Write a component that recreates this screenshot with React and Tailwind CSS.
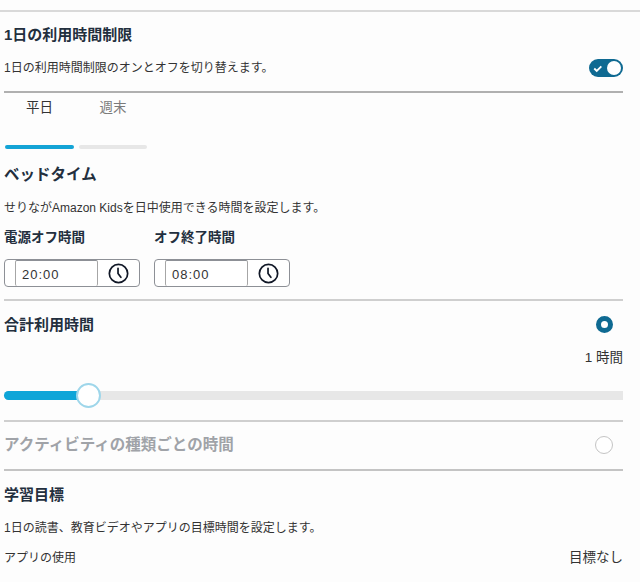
const font = { fontFamily: '"Liberation Sans", "Noto Sans CJK JP", sans-serif' };

function Clock() {
  return (
    <svg width="21" height="21" viewBox="0 0 22 22" fill="none" stroke="#111827" strokeWidth="1.8" strokeLinecap="round">
      <circle cx="11" cy="11" r="9.6" />
      <path d="M10.5 5.5 V11 L13.5 15" />
    </svg>
  );
}

function TimeField({ label, value }) {
  return (
    <div className="w-[136px]">
      <div className="h-[20px] text-[13.5px] leading-[20px] font-bold text-[#232f3e]">{label}</div>
      <div className="mt-[11px] h-[28px] flex items-stretch rounded-[4px] border border-[#8d9096] bg-white">
        <div className="ml-[10px] w-[83px] border-x border-[#a6a6a6] border-t border-t-[#8d9096] rounded-[2px] pl-[6px] text-[13px] leading-[27px] tracking-[1px] text-[#333]">{value}</div>
        <div className="flex-1 flex items-center justify-center"><Clock /></div>
      </div>
    </div>
  );
}

export default function App() {
  return (
    <div style={font} className="w-[640px] h-[582px] overflow-hidden bg-[#fdfdfd] pt-[10px] pl-[4px] pr-[17px]">
      <div className="h-[2px] bg-[#d9d9d9] -ml-[4px] -mr-[17px]" />
      <div className="h-[68px] border-b-2 border-[#b0b0b0] mt-[13px]">
        <div className="h-[20px] text-[15px] leading-[20px] font-bold text-[#232f3e]">1日の利用時間制限</div>
        <div className="mt-[13px] h-[20px] flex items-center justify-between">
          <span className="text-[12px] text-[#333]">1日の利用時間制限のオンとオフを切り替えます。</span>
          <span className="w-[34px] h-[18px] rounded-full bg-[#0f6a92] flex items-center justify-between pl-[4px] pr-[2px]">
            <svg width="10" height="9" viewBox="0 0 12 10" fill="none" stroke="#fff" strokeWidth="2.2"><path d="M1.5 5 L4.5 8 L10 2.5" /></svg>
            <span className="w-[14px] h-[14px] rounded-full bg-white" />
          </span>
        </div>
      </div>
      <div className="flex gap-[5px] pl-[1px]">
        <div className="w-[69px] text-center">
          <div className="h-[52px] pt-[5px] text-[13.5px] leading-[20px] text-[#333]">平日</div>
          <div className="h-[4px] rounded-full bg-[#14a4d6]" />
        </div>
        <div className="w-[68px] text-center">
          <div className="h-[52px] pt-[5px] text-[13.5px] leading-[20px] text-[#7a7a7a]">週末</div>
          <div className="h-[4px] rounded-full bg-[#e7e7e7]" />
        </div>
      </div>
      <div className="mt-[16px] h-[20px] text-[15.5px] leading-[20px] font-bold text-[#232f3e]">ベッドタイム</div>
      <div className="mt-[14px] h-[18px] text-[12px] leading-[18px] text-[#333]">せりながAmazon Kidsを日中使用できる時間を設定します。</div>
      <div className="mt-[11px] flex gap-[14px] h-[71px]">
        <TimeField label="電源オフ時間" value="20:00" />
        <TimeField label="オフ終了時間" value="08:00" />
      </div>
      <div className="h-[123px] border-t-2 border-[#cfcfcf] border-b-2">
        <div className="mt-[13px] flex justify-between items-center h-[20px]">
          <span className="pt-[2px] text-[15px] font-bold text-[#232f3e]">合計利用時間</span>
          <span className="mr-[10px] w-[17px] h-[17px] rounded-full border-[5px] border-[#0f6a92] bg-white" />
        </div>
        <div className="mt-[14px] h-[20px] text-right text-[13.5px] leading-[20px] text-[#333]">1 時間</div>
        <div className="relative mt-[23px] h-[9px] rounded-l-full bg-[#e7e7e7]">
          <div className="h-full w-[76px] rounded-l-full bg-[#0ea5d8]" />
          <div className="absolute left-[72px] top-[-8px] w-[25px] h-[25px] rounded-full border-2 border-[#9ed6ea] bg-white" />
        </div>
      </div>
      <div className="h-[49px] border-b-2 border-[#c4c4c4] flex items-center justify-between pb-[2px]">
        <span className="text-[15.5px] font-bold text-[#a0a3a8]">アクティビティの種類ごとの時間</span>
        <span className="mr-[10px] w-[18px] h-[18px] rounded-full border border-[#c4c4c4] bg-white" />
      </div>
      <div className="mt-[14px] h-[20px] text-[15px] leading-[20px] font-bold text-[#232f3e]">学習目標</div>
      <div className="mt-[14px] h-[18px] text-[12px] leading-[18px] text-[#333]">1日の読書、教育ビデオやアプリの目標時間を設定します。</div>
      <div className="mt-[12px] h-[18px] flex justify-between text-[12px] leading-[18px] text-[#333]">
        <span>アプリの使用</span>
        <span className="text-[13.5px]">目標なし</span>
      </div>
    </div>
  );
}
